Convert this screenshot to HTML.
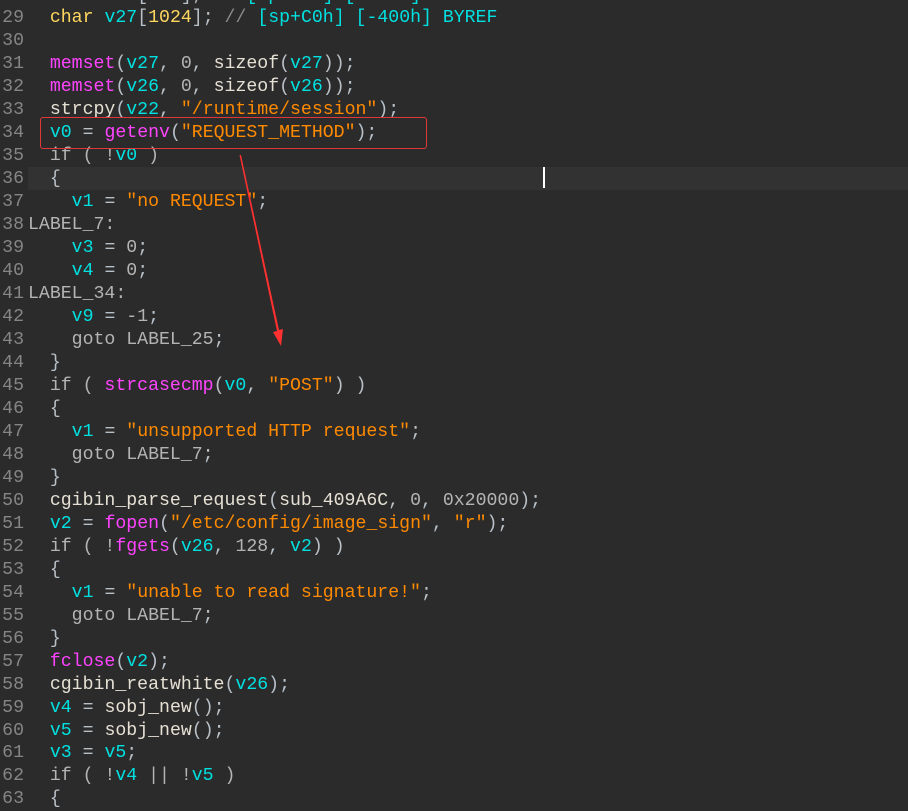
<!DOCTYPE html>
<html><head><meta charset="utf-8"><style>
html,body{margin:0;padding:0;background:#2b2b2b;width:908px;height:804px;overflow:hidden}
#w{position:absolute;left:0;top:-15.5px;font-family:"Liberation Mono",monospace;font-size:18.2px;line-height:22.97px;color:#b8b8b8}
.l{height:22.97px;position:relative}
.n{position:absolute;left:-6px;width:30px;text-align:right;color:#858585;white-space:pre}
.c{position:absolute;left:28px;white-space:pre}
.k{color:#b4b4b4}.v{color:#00e0e0}.f{color:#ff44ff}.s{color:#ff8a00}.t{color:#ffd75f}.w{color:#e6e0d4}.p{color:#b8c0c8}.g{color:#8a8a8a}
#hl{position:absolute;left:28px;top:167px;width:880px;height:23px;background:#323232}
</style></head><body>
<div id="hl"></div>
<div id="w"><div class="l"><span class="n">28</span><span class="c">  <span class="t">char</span> <span class="v">v26</span><span class="p">[</span><span class="t">128</span><span class="p">]</span>; <span class="g">//</span> <span class="v">[sp+4Ch] [-4C0h] BYREF</span></span></div><div class="l"><span class="n">29</span><span class="c">  <span class="t">char</span> <span class="v">v27</span><span class="p">[</span><span class="t">1024</span><span class="p">]</span><span class="p">;</span> <span class="g">//</span> <span class="v">[sp+C0h] [-400h] BYREF</span></span></div><div class="l"><span class="n">30</span><span class="c"></span></div><div class="l"><span class="n">31</span><span class="c">  <span class="f">memset</span><span class="p">(</span><span class="v">v27</span><span class="p">, </span><span class="k">0</span><span class="p">, </span><span class="w">sizeof</span><span class="p">(</span><span class="v">v27</span><span class="p">));</span></span></div><div class="l"><span class="n">32</span><span class="c">  <span class="f">memset</span><span class="p">(</span><span class="v">v26</span><span class="p">, </span><span class="k">0</span><span class="p">, </span><span class="w">sizeof</span><span class="p">(</span><span class="v">v26</span><span class="p">));</span></span></div><div class="l"><span class="n">33</span><span class="c">  <span class="w">strcpy</span><span class="p">(</span><span class="v">v22</span><span class="p">, </span><span class="s">"/runtime/session"</span><span class="p">);</span></span></div><div class="l"><span class="n">34</span><span class="c">  <span class="v">v0</span> <span class="p">=</span> <span class="f">getenv</span><span class="p">(</span><span class="s">"REQUEST_METHOD"</span><span class="p">);</span></span></div><div class="l"><span class="n">35</span><span class="c">  <span class="k">if ( !</span><span class="v">v0</span><span class="k"> )</span></span></div><div class="l"><span class="n">36</span><span class="c">  <span class="p">{</span></span></div><div class="l"><span class="n">37</span><span class="c">    <span class="v">v1</span> <span class="p">=</span> <span class="s">"no REQUEST"</span><span class="p">;</span></span></div><div class="l"><span class="n">38</span><span class="c"><span class="k">LABEL_7:</span></span></div><div class="l"><span class="n">39</span><span class="c">    <span class="v">v3</span> <span class="p">=</span> <span class="k">0</span><span class="p">;</span></span></div><div class="l"><span class="n">40</span><span class="c">    <span class="v">v4</span> <span class="p">=</span> <span class="k">0</span><span class="p">;</span></span></div><div class="l"><span class="n">41</span><span class="c"><span class="k">LABEL_34:</span></span></div><div class="l"><span class="n">42</span><span class="c">    <span class="v">v9</span> <span class="p">=</span> <span class="k">-1</span><span class="p">;</span></span></div><div class="l"><span class="n">43</span><span class="c">    <span class="k">goto LABEL_25</span><span class="p">;</span></span></div><div class="l"><span class="n">44</span><span class="c">  <span class="p">}</span></span></div><div class="l"><span class="n">45</span><span class="c">  <span class="k">if ( </span><span class="f">strcasecmp</span><span class="p">(</span><span class="v">v0</span><span class="p">, </span><span class="s">"POST"</span><span class="p">) )</span></span></div><div class="l"><span class="n">46</span><span class="c">  <span class="p">{</span></span></div><div class="l"><span class="n">47</span><span class="c">    <span class="v">v1</span> <span class="p">=</span> <span class="s">"unsupported HTTP request"</span><span class="p">;</span></span></div><div class="l"><span class="n">48</span><span class="c">    <span class="k">goto LABEL_7</span><span class="p">;</span></span></div><div class="l"><span class="n">49</span><span class="c">  <span class="p">}</span></span></div><div class="l"><span class="n">50</span><span class="c">  <span class="w">cgibin_parse_request</span><span class="p">(</span><span class="w">sub_409A6C</span><span class="p">, </span><span class="k">0</span><span class="p">, </span><span class="k">0x20000</span><span class="p">);</span></span></div><div class="l"><span class="n">51</span><span class="c">  <span class="v">v2</span> <span class="p">=</span> <span class="f">fopen</span><span class="p">(</span><span class="s">"/etc/config/image_sign"</span><span class="p">, </span><span class="s">"r"</span><span class="p">);</span></span></div><div class="l"><span class="n">52</span><span class="c">  <span class="k">if ( !</span><span class="f">fgets</span><span class="p">(</span><span class="v">v26</span><span class="p">, </span><span class="k">128</span><span class="p">, </span><span class="v">v2</span><span class="p">) )</span></span></div><div class="l"><span class="n">53</span><span class="c">  <span class="p">{</span></span></div><div class="l"><span class="n">54</span><span class="c">    <span class="v">v1</span> <span class="p">=</span> <span class="s">"unable to read signature!"</span><span class="p">;</span></span></div><div class="l"><span class="n">55</span><span class="c">    <span class="k">goto LABEL_7</span><span class="p">;</span></span></div><div class="l"><span class="n">56</span><span class="c">  <span class="p">}</span></span></div><div class="l"><span class="n">57</span><span class="c">  <span class="f">fclose</span><span class="p">(</span><span class="v">v2</span><span class="p">);</span></span></div><div class="l"><span class="n">58</span><span class="c">  <span class="w">cgibin_reatwhite</span><span class="p">(</span><span class="v">v26</span><span class="p">);</span></span></div><div class="l"><span class="n">59</span><span class="c">  <span class="v">v4</span> <span class="p">=</span> <span class="w">sobj_new</span><span class="p">();</span></span></div><div class="l"><span class="n">60</span><span class="c">  <span class="v">v5</span> <span class="p">=</span> <span class="w">sobj_new</span><span class="p">();</span></span></div><div class="l"><span class="n">61</span><span class="c">  <span class="v">v3</span> <span class="p">=</span> <span class="v">v5</span><span class="p">;</span></span></div><div class="l"><span class="n">62</span><span class="c">  <span class="k">if ( !</span><span class="v">v4</span><span class="k"> || !</span><span class="v">v5</span><span class="k"> )</span></span></div><div class="l"><span class="n">63</span><span class="c">  <span class="p">{</span></span></div></div>
<div style="position:absolute;left:543px;top:167px;width:2px;height:21px;background:#fff"></div>
<div style="position:absolute;left:40px;top:117px;width:385px;height:30px;border:1.5px solid #e03838;border-radius:3px"></div>
<svg width="908" height="804" style="position:absolute;left:0;top:0">
<polygon points="239.5,155 241,155 279,330 283,329 281,346 273,332 277,331" fill="#ff3030"/>
</svg>
</body></html>
